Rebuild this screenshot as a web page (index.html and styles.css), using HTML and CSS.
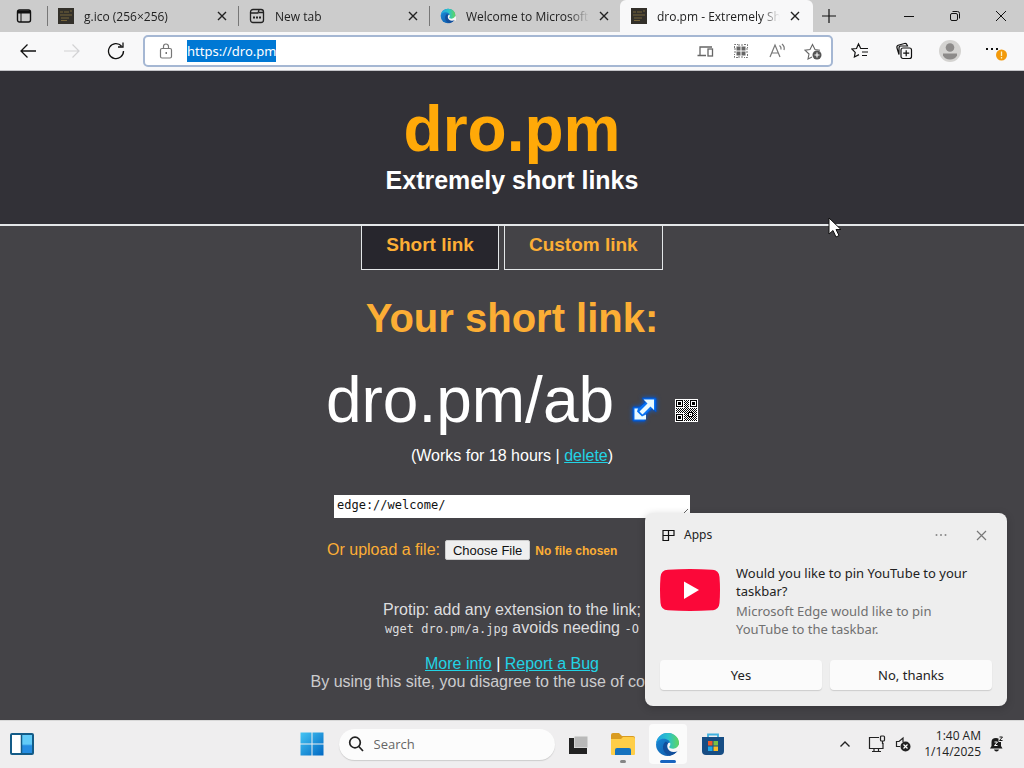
FILE: index.html
```html
<!DOCTYPE html>
<html lang="en">
<head>
<meta charset="utf-8">
<title>dro.pm - Extremely Short Links</title>
<link rel="stylesheet" href="styles.css">
</head>
<body>
<svg class="defs" width="0" height="0" aria-hidden="true">
  <defs>
    <linearGradient id="edgeBlue" x1="0" y1="0" x2="1" y2="1"><stop offset="0" stop-color="#1b8fdc"/><stop offset="1" stop-color="#0c4fa0"/></linearGradient>
    <linearGradient id="edgeGreen" x1="0" y1="0" x2="1" y2="0"><stop offset="0" stop-color="#1fa0e4"/><stop offset="0.55" stop-color="#2bc3c9"/><stop offset="1" stop-color="#61d65c"/></linearGradient>
    <symbol id="close" viewBox="0 0 10 10"><path d="M1 1l8 8M9 1l-8 8" fill="none" stroke="currentColor" stroke-width="1.4"/></symbol>
    <symbol id="drop" viewBox="0 0 16 16"><rect width="16" height="16" fill="#33302a"/><path d="M2 4h3M6 4h5M12 3h2M2 7h12M3 10h8M3 12.500h6" stroke="#77653a" stroke-width="1"/></symbol>
    <symbol id="edge" viewBox="0 0 24 24">
      <circle cx="12" cy="12" r="11" fill="url(#edgeBlue)"/>
      <path d="M10.500 9C6 11.500 6.500 20 14 22.800q5-.8 8-5L14 12z" fill="#124f9c"/>
      <path d="M12.800 10.500C10.500 13 12 19 18 19.200q2.500 0 4.500-1.200L24 20V13l-6-4z" fill="#f7f7f7"/>
      <path d="M1 12C1.500 5.500 6.200 1 12.200 1 18.500 1 23 5.500 23 10.300c0 3.500-2.600 5.700-5.600 5.700-2.200 0-3.700-.8-3.700-1.700 0-.7 1-1 1-2.800C14.700 8.800 12 6.500 8.400 6.500 4.500 6.500 1.600 9 1 12z" fill="url(#edgeGreen)"/>
    </symbol>
    <pattern id="modules" width="2" height="2" patternUnits="userSpaceOnUse"><rect width="1" height="1" fill="#000"/><rect x="1" y="1" width="1" height="1" fill="#000"/></pattern>
  </defs>
</svg>

<header class="browser">
  <div class="tabstrip">
    <button class="tab-actions" aria-label="Tab actions"><svg width="16" height="16" viewBox="0 0 16 16" fill="none" stroke="#111"><rect x="1.500" y="2" width="13" height="12" rx="2" stroke-width="1.400"/><path d="M2 4h12" stroke-width="3"/><path d="M5 5v9" stroke-width="1"/></svg></button>
    <div class="tab"><svg class="favicon"><use href="#drop"/></svg><button class="tab-title">g.ico (256×256)</button><button class="tab-close" aria-label="Close tab"><svg><use href="#close"/></svg></button></div>
    <div class="tab"><svg class="favicon" viewBox="0 0 16 16" fill="none" stroke="#222" stroke-width="1.300"><rect x="1.500" y="1.500" width="13" height="13" rx="2.500"/><path d="M2 5h7l1-3M10 4.500h4"/><path d="M4 9.500h2M7 9.500h2M10 9.500h2" stroke-width="2"/></svg><button class="tab-title">New tab</button><button class="tab-close" aria-label="Close tab"><svg><use href="#close"/></svg></button></div>
    <div class="tab"><svg class="favicon"><use href="#edge"/></svg><button class="tab-title">Welcome to Microsoft Edge</button><button class="tab-close" aria-label="Close tab"><svg><use href="#close"/></svg></button></div>
    <div class="tab active"><svg class="favicon"><use href="#drop"/></svg><button class="tab-title">dro.pm - Extremely Short Links</button><button class="tab-close" aria-label="Close tab"><svg><use href="#close"/></svg></button></div>
    <button class="new-tab" aria-label="New tab"><svg width="14" height="14" viewBox="0 0 14 14" stroke="#111" stroke-width="1.200"><path d="M7 0v14M0 7h14"/></svg></button>
    <div class="window-controls">
      <button aria-label="Minimize"><svg width="12" height="12" viewBox="0 0 12 12" stroke="#111"><path d="M1 6.500h10"/></svg></button>
      <button aria-label="Restore"><svg width="12" height="12" viewBox="0 0 12 12" fill="none" stroke="#111"><rect x="1.500" y="3.500" width="7" height="7" rx="1.500"/><path d="M3.500 1.500h5a2 2 0 0 1 2 2v5"/></svg></button>
      <button aria-label="Close"><svg width="12" height="12" viewBox="0 0 12 12" stroke="#111"><path d="M1 1l10 10M11 1L1 11"/></svg></button>
    </div>
  </div>
  <div class="toolbar">
    <button aria-label="Back"><svg width="18" height="18" viewBox="0 0 18 18" fill="none" stroke="#111" stroke-width="1.300"><path d="M17 9H2M8.500 2.500L2 9l6.500 6.500"/></svg></button>
    <button aria-label="Forward" disabled><svg width="18" height="18" viewBox="0 0 18 18" fill="none" stroke="#d2d2d4" stroke-width="1.200"><path d="M1 9h15M9.500 2.500L16 9l-6.500 6.500"/></svg></button>
    <button aria-label="Refresh"><svg width="18" height="18" viewBox="0 0 18 18" fill="none" stroke="#111" stroke-width="1.300"><path d="M16.500 9A7.500 7.500 0 1 1 14.500 4M11 5h5V.5"/></svg></button>
    <div class="address">
      <button aria-label="Site information"><svg width="16" height="16" viewBox="0 0 16 16" fill="none" stroke="#777" stroke-width="1.200"><rect x="2.500" y="5.500" width="11" height="9.500" rx="1.500"/><path d="M5.500 5.500V3.500a2.500 2.500 0 0 1 5 0v2"/><path d="M7.500 10h1.500" stroke-width="2"/></svg></button>
      <input class="url" type="text" value="https://dro.pm" size="12" aria-label="Address">
      <div class="address-actions">
        <button aria-label="Send to device"><svg width="17" height="16" viewBox="0 0 17 16" fill="none" stroke="#666" stroke-width="1.300"><path d="M9 12.500H.5M3 12V4h12"/><rect x="11" y="6" width="4.500" height="7"/></svg></button>
        <button aria-label="QR code"><svg width="16" height="16" viewBox="0 0 16 16" fill="none" stroke="#777"><path d="M1.500 5V1.500H5M11 1.500h3.500V5M14.500 11v3.500H11M5 14.500H1.500V11M5 2h6M5 14h6M2 5v6M14 5v6" stroke-dasharray="2 1"/><path d="M3.500 3.500h4v4h-4zM8.500 3.500h4v4h-4zM3.500 8.500h4v4h-4zM8.500 8.500h4v4h-4z" fill="#666" stroke="none"/></svg></button>
        <button aria-label="Read aloud"><svg width="17" height="16" viewBox="0 0 17 16" fill="none" stroke="#777" stroke-width="1.200"><path d="M1 14L6 2l5 12M3 10h6M10.500 2.500q2 1.500 1.500 4M13 1q3 2.500 2 6"/></svg></button>
        <button aria-label="Add to favorites"><svg width="18" height="18" viewBox="0 0 18 18" fill="none" stroke="#666" stroke-width="1.100"><path d="M8 15l-4 2 1-5-4-3.800 5-.7L8.500 2.500l2.500 5 5 .7"/><circle cx="13" cy="13" r="4.500" fill="#555" stroke="none"/><path d="M13 10.500v5M10.500 13h5" stroke="#fff"/></svg></button>
      </div>
    </div>
    <button aria-label="Favorites"><svg width="18" height="18" viewBox="0 0 18 18" fill="none" stroke="#111" stroke-width="1.200"><path d="M9.500 6L7.500 2 5.500 6.500.8 7l3.400 3.400L3.400 15l4.600-2.400M7.500 2l2.200 4.500H17M11 10h6M11 13.500h5"/></svg></button>
    <button aria-label="Collections"><svg width="18" height="18" viewBox="0 0 18 18" fill="none" stroke="#111" stroke-width="1.200"><rect x="6" y="6" width="10.500" height="10.500" rx="2"/><path d="M4 12.500L2 6q-.6-2 1.200-2.800L9.500 1.500q2-.4 2.600 1.500L12.500 4H6Q4 4 4 6zM11.200 8.200v6M8.200 11.200h6"/></svg></button>
    <button aria-label="Profile" class="profile"><svg width="22" height="22" viewBox="0 0 22 22"><circle cx="11" cy="11" r="11" fill="#d4d3d1"/><circle cx="11" cy="7.500" r="4.300" fill="#8d8b8a"/><path d="M4 13.500h14v2q-2 4-7 4t-7-4z" fill="#8d8b8a"/></svg></button>
    <button aria-label="Settings and more"><svg width="22" height="20" viewBox="0 0 22 20"><path d="M1 7h2v2H1zM6 7h2v2H6zM11 7h2v2h-2z" fill="#111"/><circle cx="16.500" cy="14" r="5.500" fill="#f39a0b"/><path d="M16.500 10.500V15M16.500 16v1.500" stroke="#fff3c4" stroke-width="1.300"/></svg></button>
  </div>
</header>

<main class="page">
  <div class="hero">
    <h1>dro.pm</h1>
    <p>Extremely short links</p>
  </div>
  <nav class="modes"><a class="current" href="#short">Short link</a><a href="#custom">Custom link</a></nav>
  <h2>Your short link:</h2>
  <div class="result">
    <span>dro.pm/ab</span>
    <a href="#open" aria-label="Open link"><svg class="open-icon" width="25" height="25" viewBox="0 0 25 25"><path d="M10 1h14v14l-4-3.500-7 7V24H1V10h6.500l6-5z" fill="#0873f4" stroke="#064fbd"/><path d="M11.500 2.500H22v10.500l-3.500-3.500-8 8-3-3 8-8zM2.500 11.500H6L5 14.500 10 19.500l4-2v5H2.500z" fill="#eafaff"/></svg></a>
    <a href="#qr" aria-label="QR code"><svg width="23" height="23" viewBox="0 0 23 23" shape-rendering="crispEdges"><rect width="23" height="23" fill="#fff"/><path d="M9 1h5v21H9zM1 9h21v5H1zM14 14h8v8h-8z" fill="url(#modules)"/><path d="M1 1h7v7H1zM15 1h7v7h-7zM1 15h7v7H1zM13 13h5v5h-5z" fill="#000"/><path d="M2 2h5v5H2zM16 2h5v5h-5zM2 16h5v5H2zM14 14h3v3h-3z" fill="#fff"/><path d="M3 3h3v3H3zM17 3h3v3h-3zM3 17h3v3H3zM15 15h1v1h-1z" fill="#000"/></svg></a>
  </div>
  <p class="expiry">(Works for 18 hours | <a href="#delete">delete</a>)</p>
  <textarea class="target" rows="1" aria-label="Link target">edge://welcome/</textarea>
  <div class="upload"><label for="file">Or upload a file:</label> <input id="file" type="file"></div>
  <p class="tip">Protip: add any extension to the link;<br><code>wget dro.pm/a.jpg</code> avoids needing <code>-O</code></p>
  <p class="legal"><span class="links"><a href="#info">More info</a> | <a href="#bug">Report a Bug</a></span><br>By using this site, you disagree to the use of cookies too.</p>
  <svg class="cursor" width="14" height="22" viewBox="0 0 14 22"><path d="M1 1v16l4-3.500 3 6.500 3-1.500-3-6h5z" fill="#fff" stroke="#111"/></svg>

  <section class="toast" aria-label="Apps notification">
    <header>
      <svg width="13" height="13" viewBox="0 0 13 13" fill="none" stroke="#111" stroke-width="1.200"><path d="M1 1.500h5.500v5H1zM6.500 1.500H12v5H6.500M1 6.500v5h5.500v-5"/></svg>
      <span>Apps</span>
      <button aria-label="More"><svg width="12" height="4" viewBox="0 0 12 4" fill="#888"><circle cx="1.500" cy="2" r="1"/><circle cx="6" cy="2" r="1"/><circle cx="10.500" cy="2" r="1"/></svg></button>
      <button aria-label="Dismiss"><svg width="11" height="11" viewBox="0 0 11 11" stroke="#777" stroke-width="1.200"><path d="M1 1l9 9M10 1l-9 9"/></svg></button>
    </header>
    <div class="toast-body">
      <svg width="60" height="42" viewBox="0 0 60 42"><path d="M8 .7Q30-.7 52 .7 59 1 59.500 8q1 13 0 26-.5 7-7.500 7.300-22 1.400-44 0Q1 41 .5 34q-1-13 0-26Q1 1 8 .7z" fill="#fb0839"/><path d="M24 12.500L39 21l-15 9z" fill="#fff"/></svg>
      <div><p>Would you like to pin YouTube to your taskbar?</p><p class="detail">Microsoft Edge would like to pin YouTube to the taskbar.</p></div>
    </div>
    <div class="toast-actions"><button>Yes</button><button>No, thanks</button></div>
  </section>
</main>

<footer class="taskbar">
  <div class="taskbar-left"><button aria-label="Widgets"><svg width="24" height="22" viewBox="0 0 24 22"><defs><linearGradient id="wid" x2="0" y2="1"><stop offset=".5" stop-color="#62cbf8"/><stop offset=".6" stop-color="#258ce1"/></linearGradient></defs><rect x="1" y="1" width="22" height="20" rx="1" fill="#fff" stroke="#145b87" stroke-width="2"/><rect x="12" y="2" width="10" height="18" fill="url(#wid)"/><path d="M11.500 2v18" stroke="#145b87" stroke-width="1.500"/></svg></button></div>
  <div class="taskbar-apps">
    <button aria-label="Start"><svg width="24" height="24" viewBox="0 0 24 24"><defs><linearGradient id="win" x2="1" y2="1"><stop stop-color="#45c5f4"/><stop offset="1" stop-color="#0067c2"/></linearGradient></defs><path d="M.5.5h11v11H.5zM12.500.5h11v11h-11zM.5 12.500h11v11H.5zM12.500 12.500h11v11h-11z" fill="url(#win)"/></svg></button>
    <label class="search"><svg width="16" height="16" viewBox="0 0 16 16" fill="none" stroke="#222" stroke-width="1.700"><circle cx="7" cy="6.500" r="5.300"/><path d="M10.800 10.500L15 15"/></svg><input type="text" placeholder="Search" aria-label="Search"></label>
    <button aria-label="Task view"><svg width="22" height="20" viewBox="0 0 22 20"><rect x="7" y="2" width="14" height="12" fill="#b9b9b9" stroke="#eee"/><path d="M2 4h5v10h13v6H2z" fill="#222"/></svg></button>
    <button class="running" aria-label="File Explorer"><svg width="26" height="24" viewBox="0 0 26 24"><path d="M1 3q0-2 2-2h6l3 3h11q2 0 2 2v14H1z" fill="#d99b21"/><path d="M1 7h10l2-2h10q2 0 2 2v15q0 1-1 1H2q-1 0-1-1z" fill="#ffce48"/><path d="M5 23v-5q0-2 2-2h12q2 0 2 2v5z" fill="#1672be"/></svg></button>
    <button class="running focused" aria-label="Microsoft Edge"><svg width="25" height="25"><use href="#edge"/></svg></button>
    <button aria-label="Microsoft Store"><svg width="24" height="24" viewBox="0 0 24 24"><path d="M7 6V2.500h10V6" fill="none" stroke="#3fb0e0" stroke-width="1.800"/><path d="M1 5h22v14q0 4-4 4H5q-4 0-4-4z" fill="#174d84"/><path d="M7 9h4.500v4.500H7z" fill="#f05a2a"/><path d="M12.500 9H17v4.500h-4.500z" fill="#7cc043"/><path d="M7 14.500h4.500V19H7z" fill="#20a8e8"/><path d="M12.500 14.500H17V19h-4.500z" fill="#fcbc24"/></svg></button>
  </div>
  <div class="tray">
    <button aria-label="Show hidden icons"><svg width="12" height="8" viewBox="0 0 12 8" fill="none" stroke="#222" stroke-width="1.400"><path d="M1.500 6.500L6 2l4.500 4.500"/></svg></button>
    <button aria-label="Network"><svg width="18" height="18" viewBox="0 0 18 18" fill="none" stroke="#222" stroke-width="1.200"><path d="M11 2.500H1.500v11H15V8M6 13.500v3M10.500 13.500v3M4 16.500h9"/><rect x="12.500" y="1" width="4" height="5" rx="1"/><path d="M14.500 6v3"/></svg></button>
    <button aria-label="Volume muted"><svg width="16" height="16" viewBox="0 0 16 16" fill="none" stroke="#222" stroke-width="1.200"><path d="M5 10.500H1.500v-5H4L8 2v4"/><circle cx="10.500" cy="10.500" r="5" fill="#222" stroke="none"/><path d="M8.500 8.500l4 4M12.500 8.500l-4 4" stroke="#fff"/></svg></button>
    <button class="clock"><span>1:40 AM</span><span>1/14/2025</span></button>
    <button aria-label="Notifications"><svg width="15" height="16" viewBox="0 0 15 16"><path d="M1 12.500L2.500 10V6q0-4 4.500-4 1.500 0 2.500.6V6h2.500v4l1.500 2.500zM5 13.500h5q-.5 2-2.500 2t-2.500-2z" fill="#1b1b1b"/><path d="M5.500 6h3L5.500 9.500h3" fill="none" stroke="#fff"/><path d="M10.500 1h3l-3 3.500h3" fill="none" stroke="#1b1b1b"/></svg></button>
  </div>
</footer>
</body>
</html>
```
FILE: styles.css
```css
* { box-sizing: border-box; }
body {
  margin: 0;
  min-height: 100vh;
  display: flex;
  flex-direction: column;
  font-family: "Open Sans", "Noto Sans", sans-serif;
  font-size: 12px;
  color: #222;
}
.defs { position: absolute; }
svg { display: block; flex: none; }
p, h1, h2 { margin: 0; }
button {
  display: flex;
  align-items: center;
  justify-content: center;
  border: 0;
  padding: 0;
  background: none;
  font: inherit;
  color: inherit;
}
input { font: inherit; border: 0; padding: 0; }

/* Browser chrome */
.tabstrip { display: flex; height: 32px; background: #cccccc; }
.tab-actions { width: 47px; }
.tab {
  flex: 0 1 191px;
  min-width: 0;
  display: flex;
  align-items: center;
  gap: 10px;
  padding: 0 11px;
  background: linear-gradient(#777, #777) left center / 1px 20px no-repeat;
}
.tab.active { flex-basis: 193px; padding-right: 13px; background: #f8f8f9; border-radius: 6px 6px 0 0; }
.favicon { width: 16px; height: 16px; }
.tab-title {
  flex: 1;
  min-width: 0;
  justify-content: flex-start;
  overflow: hidden;
  white-space: nowrap;
  -webkit-mask-image: linear-gradient(to right, #000 84%, transparent);
  mask-image: linear-gradient(to right, #000 84%, transparent);
}
.tab-close { width: 10px; height: 10px; }
.tab-close svg { width: 10px; height: 10px; }
.new-tab { width: 32px; }
.window-controls { display: flex; margin-left: auto; }
.window-controls button { width: 46px; }
.toolbar {
  display: flex;
  align-items: center;
  height: 39px;
  padding: 0 6px 1px;
  background: #f8f8f9;
  border-bottom: 1px solid #c4c4c8;
}
.toolbar > button { width: 44px; height: 32px; }
.toolbar > .profile { width: 48px; }
.address {
  flex: 1;
  display: flex;
  align-items: center;
  height: 32px;
  margin: 0 5px;
  border: 2px solid #a5b7d3;
  border-radius: 5px;
  background: #fff;
}
.address button { width: 36px; height: 26px; }
.address > button { width: 42px; }
.url { background: #0078d4; color: #fff; font-family: "Noto Sans", "Open Sans", sans-serif; font-size: 13px; line-height: 22px; height: 22px; field-sizing: content; }
.address-actions { display: flex; margin-left: auto; }

/* Page */
.page {
  position: relative;
  flex: 1;
  background: #444347;
  color: #fff;
  font-family: "Liberation Sans", Arial, sans-serif;
  font-size: 16px;
  line-height: 18px;
  text-align: center;
}
.hero { padding: 22px 0 29px; background: #323137; border-bottom: 2px solid #e4e7e9; }
h1 { font-size: 64px; line-height: 72px; color: #ffa908; }
.hero p { font-size: 25px; line-height: 30px; font-weight: bold; }
.modes { display: flex; justify-content: center; gap: 5px; }
.modes a {
  padding: 7px 24px 12px;
  border: 1px solid #e4e7e9;
  border-top: 0;
  color: #fcae35;
  font-size: 19px;
  line-height: 24px;
  font-weight: bold;
  text-decoration: none;
}
.modes .current { background: #27262d; }
h2 { margin-top: 25px; font-size: 40px; line-height: 46px; color: #fcae35; }
.result { display: flex; justify-content: center; align-items: flex-end; margin-top: 22px; font-size: 64px; line-height: 74px; }
.result a { margin: 0 0 15px 18px; }
.result .open-icon { filter: drop-shadow(0 0 2px #075cd5); }
.expiry { margin-top: 10px; }
.page p a { color: #22d3e5; }
.target {
  display: block;
  width: 356px;
  height: 23px;
  margin: 30px auto 0;
  padding: 1px 2px;
  border: 1px solid #fff;
  background: #fff;
  color: #111;
  font: 12px/16px "DejaVu Sans Mono", monospace;
  overflow: hidden;
}
.upload { display: flex; justify-content: center; align-items: center; gap: 5px; margin-top: 22px; color: #fcae35; }
.upload input { width: 252px; font-size: 12px; font-weight: bold; text-align: left; }
.upload input::file-selector-button {
  height: 20px;
  margin: 0 5px 0 0;
  padding: 0 7px;
  border: 1px solid #ccc;
  border-radius: 2px;
  background: #efefef;
  color: #111;
  font: 13px "Liberation Sans", Arial, sans-serif;
}
.tip { margin-top: 41px; color: #dddddf; }
code { font: 12px/16px "DejaVu Sans Mono", monospace; }
.legal { margin-top: 18px; color: #ccccce; }
.links { color: #fff; }
.cursor { position: absolute; left: 828px; top: 146px; }

/* Notification */
.toast {
  position: absolute;
  right: 17px;
  bottom: 14px;
  width: 362px;
  padding: 12px 15px 16px;
  border-radius: 8px;
  background: #eeeeee;
  color: #222;
  box-shadow: 0 2px 8px rgba(0, 0, 0, 0.2);
  font: 13px/18px "Noto Sans", "Open Sans", sans-serif;
  text-align: left;
}
.toast header { display: flex; align-items: center; gap: 9px; height: 20px; padding-left: 2px; font-size: 12px; }
.toast header span { flex: 1; }
.toast header button { width: 22px; height: 20px; }
.toast header button + button { margin-left: 9px; }
.toast-body { display: flex; gap: 16px; margin-top: 19px; padding-right: 12px; }
.toast-body svg { margin-top: 5px; }
.toast-body .detail { margin-top: 2px; color: #707070; }
.toast-actions { display: grid; grid-template-columns: 1fr 1fr; gap: 8px; margin-top: 22px; }
.toast-actions button { height: 30px; border-radius: 4px; background: #fbfbfb; box-shadow: 0 1px 1px #ccc; }

/* Taskbar */
.taskbar {
  display: grid;
  grid-template-columns: 1fr auto 1fr;
  align-items: center;
  height: 48px;
  padding-bottom: 1px;
  background: #efeeef;
  border-top: 1px solid #d8d8d8;
}
.taskbar-left button { width: 44px; height: 40px; }
.taskbar-apps { display: flex; align-items: center; gap: 1px; }
.taskbar-apps button { position: relative; width: 44px; height: 40px; }
.search { display: flex; align-items: center; gap: 10px; width: 216px; height: 31px; margin-left: 4px; padding: 0 9px; border-radius: 16px; background: #fcfcfc; box-shadow: 0 1px 1px #ccc; }
.search input { flex: 1; min-width: 0; background: none; font-size: 13px; }
.search input::placeholder { color: #666; }
.taskbar-apps .focused { width: 38px; margin: 0 3px; border-radius: 4px; background: #fbfbfb; }
.running::after { content: ""; position: absolute; bottom: 1px; width: 6px; height: 3px; border-radius: 2px; background: #858585; }
.focused::after { width: 16px; background: #1764c0; }
.tray { display: flex; align-items: center; justify-content: flex-end; padding-right: 13px; }
.tray button { width: 26px; height: 40px; }
.tray button:first-child { width: 38px; }
.tray .clock { flex-direction: column; align-items: flex-end; width: auto; margin-left: 8px; line-height: 16px; }
.tray .clock + button { width: 30px; }
```
